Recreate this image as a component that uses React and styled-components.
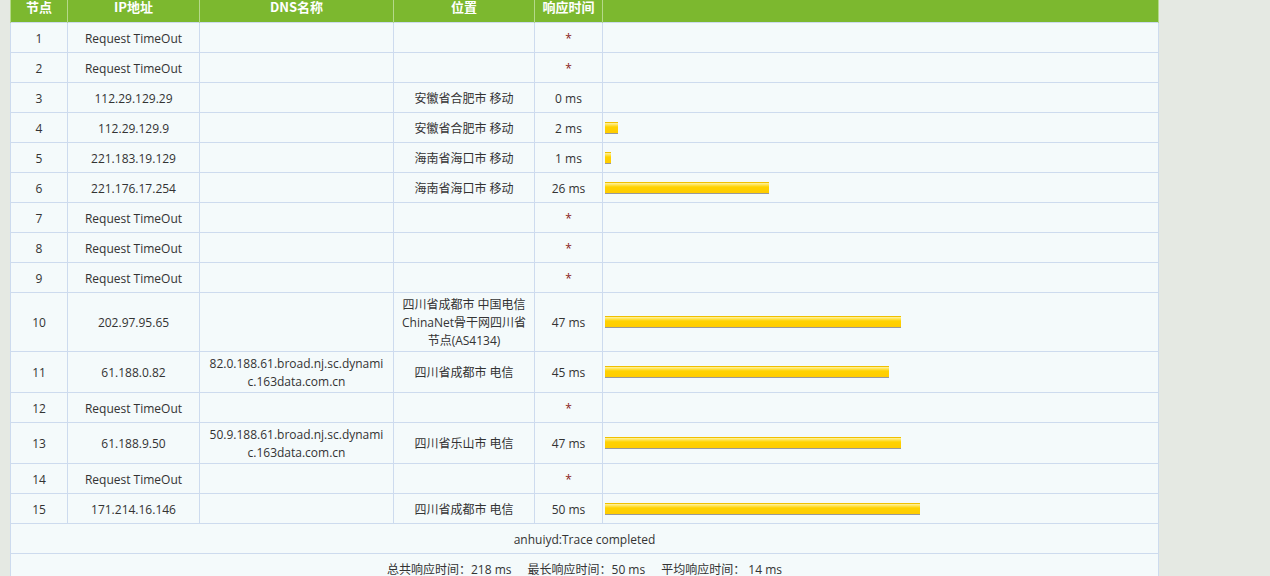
import React from "react";
import styled, { createGlobalStyle } from "styled-components";

const Global = createGlobalStyle`
  body { margin: 0; background: #e5e9e3; font-family: "Open Sans", "Noto Sans CJK SC", sans-serif; }
`;
const Wrap = styled.div` padding: 0 111px 0 10px; `;
const Table = styled.table`
  width: 1149px; border-collapse: collapse; table-layout: fixed; background: #f4fafb;
  font-size: 12px; color: #333;
`;
const Th = styled.th`
  background: #7cb82f; color: #fff; height: 22px; padding: 0; font-size: 13px;
  font-family: "Noto Sans CJK SC", serif; font-weight: 700; line-height: 13px; vertical-align: top;
  border-left: 1px solid #b5d98a; border-right: 1px solid #b5d98a;
`;
const Td = styled.td`
  border: 1px solid #cddbee; text-align: ${p => p.$left ? "left" : "center"}; padding: 2px 4px 0;
  height: ${p => (p.$h || 29) - 2}px; line-height: 18px;
  color: ${p => p.$star ? "#8b1a1a" : "#333"};
`;
const DnsTd = styled(Td)` word-break: break-all; padding: 2px 6px 0; `;
const BarTd = styled(Td)` padding: 0 2px; `;
const Bar = styled.div`
  height: 10px; border-top: 1px solid #f0c000; border-bottom: 1px solid #999;
  background: linear-gradient(#fff3a0, #ffd200 40%, #ffcc00);
`;
const Sum = styled.span` margin: 0 8px; `;

const rows = [
  [1,"Request TimeOut","","",null],
  [2,"Request TimeOut","","",null],
  [3,"112.29.129.29","","安徽省合肥市 移动",0],
  [4,"112.29.129.9","","安徽省合肥市 移动",2],
  [5,"221.183.19.129","","海南省海口市 移动",1],
  [6,"221.176.17.254","","海南省海口市 移动",26],
  [7,"Request TimeOut","","",null],
  [8,"Request TimeOut","","",null],
  [9,"Request TimeOut","","",null],
  [10,"202.97.95.65","","四川省成都市 中国电信 ChinaNet骨干网四川省节点(AS4134)",47,58],
  [11,"61.188.0.82","82.0.188.61.broad.nj.sc.dynamic.163data.com.cn","四川省成都市 电信",45,40],
  [12,"Request TimeOut","","",null],
  [13,"61.188.9.50","50.9.188.61.broad.nj.sc.dynamic.163data.com.cn","四川省乐山市 电信",47,40],
  [14,"Request TimeOut","","",null],
  [15,"171.214.16.146","","四川省成都市 电信",50],
];

export default function App() {
  return (
    <Wrap>
      <Global />
      <Table>
        <colgroup>
          <col style={{ width: 57 }} /><col style={{ width: 132 }} /><col style={{ width: 194 }} />
          <col style={{ width: 141 }} /><col style={{ width: 68 }} /><col />
        </colgroup>
        <thead><tr>
          <Th>节点</Th><Th>IP地址</Th><Th>DNS名称</Th><Th>位置</Th><Th>响应时间</Th><Th></Th>
        </tr></thead>
        <tbody>
          {rows.map(([n, ip, dns, loc, t, h]) => (
            <tr key={n}>
              <Td $h={h}>{n}</Td>
              <Td $h={h}>{ip}</Td>
              <DnsTd $h={h}>{dns}</DnsTd>
              <Td $h={h}>{loc}</Td>
              <Td $h={h} $star={t === null}>{t === null ? "*" : `${t} ms`}</Td>
              <BarTd $h={h} $left>
                {t ? <Bar style={{ width: Math.round(t * 6.3) }} /> : null}
              </BarTd>
            </tr>
          ))}
          <tr><Td colSpan={6}>anhuiyd:Trace completed</Td></tr>
          <tr><Td colSpan={6}>
            <Sum>总共响应时间：218 ms</Sum><Sum>最长响应时间：50 ms</Sum><Sum>平均响应时间： 14 ms</Sum>
          </Td></tr>
        </tbody>
      </Table>
    </Wrap>
  );
}
